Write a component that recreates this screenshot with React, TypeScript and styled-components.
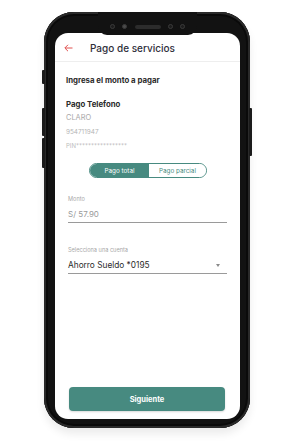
import React from "react";
import styled, { createGlobalStyle } from "styled-components";

const GlobalStyle = createGlobalStyle`
  html, body { margin: 0; padding: 0; background: #ffffff; }
  body { font-family: Inter, "Noto Sans", "Liberation Sans", sans-serif; }
  * { box-sizing: border-box; }
`;

const teal = "#478a80";

const Stage = styled.div`
  width: 298px;
  height: 443px;
  padding: 12px 0 0 44px;
  overflow: hidden;
`;

const Phone = styled.div`
  position: relative;
  width: 206px;
  height: 416px;
  padding: 21px 10px 9px 11px;
  border-radius: 30px;
  background: #121212;
  box-shadow: inset 0 0 0 2px #2a2a2a, inset 0 0 0 4px #0a0a0a, 0 6px 8px rgba(0, 0, 0, 0.08);
`;

const SideKey = styled.div<{ $side: "left" | "right"; $top: number; $h: number }>`
  position: absolute;
  top: ${(p) => p.$top}px;
  ${(p) => (p.$side === "left" ? "left: -2px;" : "right: -2px;")}
  width: 3px;
  height: ${(p) => p.$h}px;
  border-radius: 1px;
  background: #1b1b1b;
`;

const Notch = styled.div`
  position: absolute;
  top: 0;
  left: 54px;
  width: 99px;
  height: 23px;
  border-radius: 0 0 9px 9px;
  background: #121212;
  display: flex;
  align-items: center;
  justify-content: space-between;
  padding: 6px 12px 0;
`;

const Lens = styled.span<{ $fill?: boolean }>`
  width: 5px;
  height: 5px;
  border-radius: 50%;
  background: ${(p) => (p.$fill ? "#4a4a4a" : "#1c1c1c")};
  border: 1px solid #3a3a3a;
`;

const Speaker = styled.span`
  width: 26px;
  height: 4px;
  border-radius: 2px;
  background: #2c2c2c;
`;

const Screen = styled.div`
  width: 100%;
  height: 100%;
  border-radius: 13px;
  background: #ffffff;
  overflow: hidden;
  display: flex;
  flex-direction: column;
`;

const Header = styled.div`
  height: 29px;
  flex: none;
  display: flex;
  align-items: center;
  padding: 2px 0 0 9px;
  gap: 17px;
  border-bottom: 1px solid #eeeeee;
`;

const Title = styled.span`
  font-size: 10px;
  color: #2e2e3a;
  font-weight: 500;
`;

const Body = styled.div`
  flex: 1;
  display: flex;
  flex-direction: column;
  padding: 13px 13px 8px 11px;
`;

const Heading = styled.div<{ $mt?: number }>`
  font-size: 7.8px;
  font-weight: 700;
  color: #2b2b2b;
  line-height: 10px;
  margin-top: ${(p) => p.$mt ?? 0}px;
`;

const Info = styled.div<{ $size: number; $color: string }>`
  font-size: ${(p) => p.$size}px;
  color: ${(p) => p.$color};
  line-height: 10px;
  margin-top: 4px;
`;

const Toggle = styled.div`
  align-self: center;
  margin: 12px 0 0 3px;
  width: 118px;
  height: 15px;
  border: 1px solid ${teal};
  border-radius: 8px;
  display: grid;
  grid-template-columns: 59px 1fr;
  overflow: hidden;
`;

const ToggleOption = styled.div<{ $active?: boolean }>`
  display: flex;
  align-items: center;
  justify-content: center;
  font-size: 6.3px;
  background: ${(p) => (p.$active ? teal : "#ffffff")};
  color: ${(p) => (p.$active ? "#ffffff" : teal)};
`;

const Field = styled.div<{ $mt: number }>`
  margin: ${(p) => p.$mt}px 0 0 2px;
  border-bottom: 1px solid #9a9a9a;
  padding-bottom: 3px;
`;

const FieldLabel = styled.div`
  font-size: 5.6px;
  color: #a8a8a8;
  line-height: 8px;
`;

const FieldValue = styled.div<{ $dark?: boolean }>`
  margin-top: 6px;
  display: flex;
  align-items: center;
  justify-content: space-between;
  font-size: ${(p) => (p.$dark ? 8.3 : 8)}px;
  line-height: 10px;
  color: ${(p) => (p.$dark ? "#2b2b2b" : "#9a9a9a")};
  padding-right: 7px;
`;

const Caret = styled.span`
  width: 0;
  height: 0;
  border-left: 2.5px solid transparent;
  border-right: 2.5px solid transparent;
  border-top: 3px solid #8a8a8a;
`;

const Button = styled.button`
  margin-top: auto;
  margin-left: 3px;
  width: 156px;
  height: 24px;
  border: none;
  border-radius: 4px;
  background: ${teal};
  color: #ffffff;
  font-family: inherit;
  font-size: 7.5px;
  font-weight: 700;
  box-shadow: 0 1px 2px rgba(0, 0, 0, 0.15);
`;

function BackArrow() {
  return (
    <svg width="9" height="8" viewBox="0 0 9 8" fill="none" stroke="#e0504f" strokeWidth="1">
      <path d="M8.5 4H1M4 0.8L0.8 4 4 7.2" />
    </svg>
  );
}

export default function App() {
  return (
    <Stage>
      <GlobalStyle />
      <Phone>
        <SideKey $side="left" $top={58} $h={14} />
        <SideKey $side="left" $top={96} $h={28} />
        <SideKey $side="left" $top={126} $h={30} />
        <SideKey $side="right" $top={96} $h={48} />
        <Notch>
          <Lens />
          <Lens $fill />
          <Speaker />
          <Lens />
          <Lens />
        </Notch>
        <Screen>
          <Header>
            <BackArrow />
            <Title>Pago de servicios</Title>
          </Header>
          <Body>
            <Heading>Ingresa el monto a pagar</Heading>
            <Heading $mt={14}>Pago Telefono</Heading>
            <Info $size={7.4} $color="#a9a9a9">CLARO</Info>
            <Info $size={6.4} $color="#b5b5b5">954711947</Info>
            <Info $size={6} $color="#bdbdbd">PIN*****************</Info>
            <Toggle>
              <ToggleOption $active>Pago total</ToggleOption>
              <ToggleOption>Pago parcial</ToggleOption>
            </Toggle>
            <Field $mt={17}>
              <FieldLabel>Monto</FieldLabel>
              <FieldValue>S/ 57.90</FieldValue>
            </Field>
            <Field $mt={23}>
              <FieldLabel>Selecciona una cuenta</FieldLabel>
              <FieldValue $dark>
                Ahorro Sueldo *0195
                <Caret />
              </FieldValue>
            </Field>
            <Button>Siguiente</Button>
          </Body>
        </Screen>
      </Phone>
    </Stage>
  );
}
